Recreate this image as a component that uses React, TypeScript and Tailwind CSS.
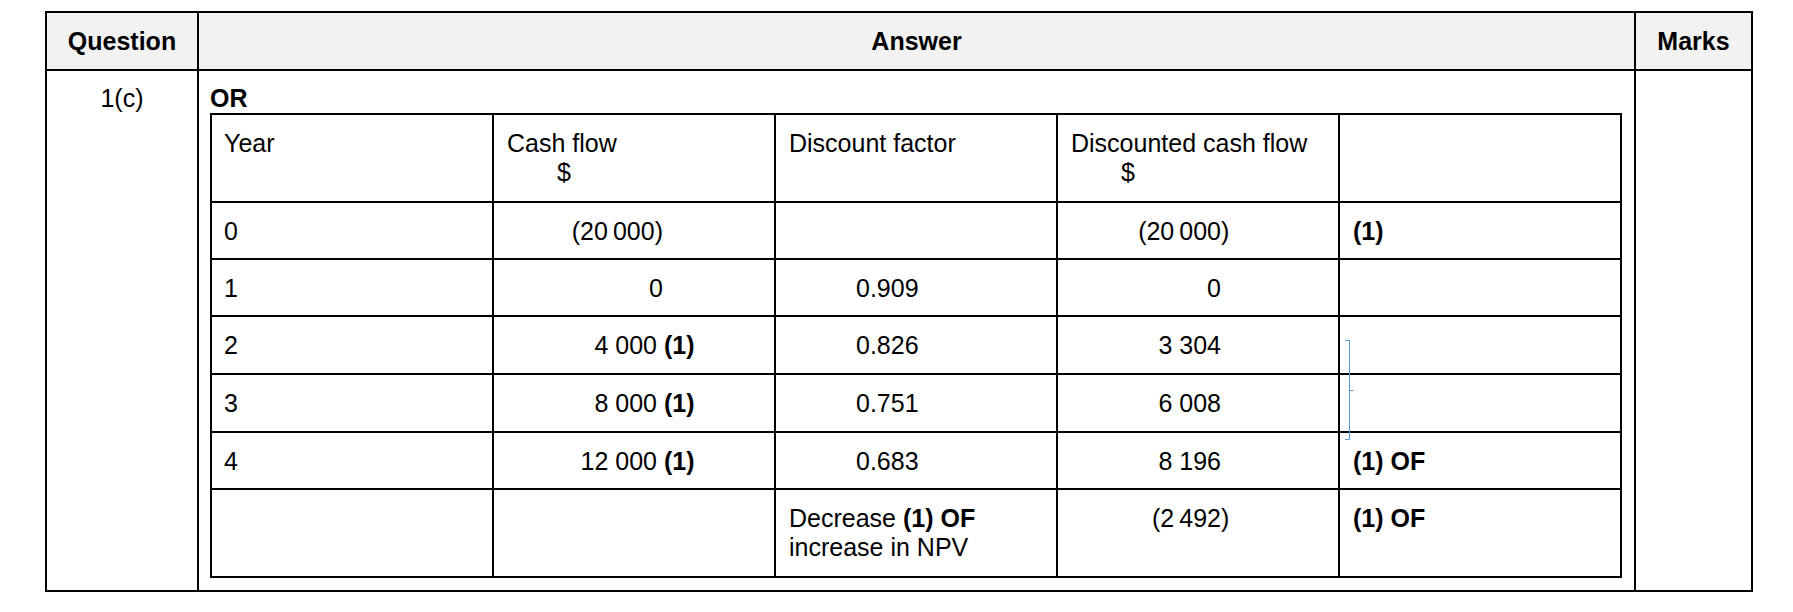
import React from "react";

function Paren({ children }: { children: React.ReactNode }) {
  // closing parenthesis hangs past the right-aligned digits
  return (
    <>
      ({children}
      <span className="inline-block w-0">)</span>
    </>
  );
}

export default function App() {
  return (
    <div className="min-h-[612px] w-[1793px] bg-white pt-[11px] pl-[45px] font-['Liberation_Sans',Arial,sans-serif] text-[25px] leading-[29px] text-black">
      <div className="w-[1708px] border-l-2 border-t-2 border-black">
        <div className="grid grid-cols-[152px_1437px_117px]">
          {/* header */}
          <div className="flex h-[58px] items-center justify-center border-r-2 border-b-2 border-black bg-[#f2f2f2] font-bold">
            Question
          </div>
          <div className="flex h-[58px] items-center justify-center border-r-2 border-b-2 border-black bg-[#f2f2f2] font-bold">
            Answer
          </div>
          <div className="flex h-[58px] items-center justify-center border-r-2 border-b-2 border-black bg-[#f2f2f2] font-bold">
            Marks
          </div>

          {/* body */}
          <div className="border-r-2 border-b-2 border-black pt-[13px] text-center">1(c)</div>
          <div className="border-r-2 border-b-2 border-black pt-[13px] pb-[12px] pl-[11px]">
            <div className="font-bold">OR</div>
            <div className="relative grid w-[1412px] grid-cols-[repeat(5,282px)] border-l-2 border-t-2 border-black">
              {/* inner header */}
              <div className="h-[88px] border-r-2 border-b-2 border-black pt-[14px] pl-[12px]">Year</div>
              <div className="h-[88px] border-r-2 border-b-2 border-black pt-[14px] pl-[13px]">
                <div>Cash flow</div>
                <div className="pl-[50px]">$</div>
              </div>
              <div className="h-[88px] border-r-2 border-b-2 border-black pt-[14px] pl-[13px]">Discount factor</div>
              <div className="h-[88px] border-r-2 border-b-2 border-black pt-[14px] pl-[13px]">
                <div>Discounted cash flow</div>
                <div className="pl-[50px]">$</div>
              </div>
              <div className="h-[88px] border-r-2 border-b-2 border-black pt-[14px] pl-[13px]"></div>

              {/* year 0 */}
              <div className="h-[57px] border-r-2 border-b-2 border-black pt-[14px] pl-[12px]">0</div>
              <div className="h-[57px] border-r-2 border-b-2 border-black pt-[14px]">
                <span className="inline-block w-[169px] text-right">(20{"\u2009"}000)</span>
              </div>
              <div className="h-[57px] border-r-2 border-b-2 border-black pt-[14px] pl-[80px]"></div>
              <div className="h-[57px] border-r-2 border-b-2 border-black pt-[14px]">
                <span className="inline-block w-[163px] text-right">
                  <Paren>20{"\u2009"}000</Paren>
                </span>
              </div>
              <div className="h-[57px] border-r-2 border-b-2 border-black pt-[14px] pl-[13px] font-bold">(1)</div>

              {/* year 1 */}
              <div className="h-[57px] border-r-2 border-b-2 border-black pt-[14px] pl-[12px]">1</div>
              <div className="h-[57px] border-r-2 border-b-2 border-black pt-[14px]">
                <span className="inline-block w-[169px] text-right">0</span>
              </div>
              <div className="h-[57px] border-r-2 border-b-2 border-black pt-[14px] pl-[80px]">0.909</div>
              <div className="h-[57px] border-r-2 border-b-2 border-black pt-[14px]">
                <span className="inline-block w-[163px] text-right">0</span>
              </div>
              <div className="h-[57px] border-r-2 border-b-2 border-black pt-[14px] pl-[13px]"></div>

              {/* year 2 */}
              <div className="h-[58px] border-r-2 border-b-2 border-black pt-[14px] pl-[12px]">2</div>
              <div className="h-[58px] border-r-2 border-b-2 border-black pt-[14px] whitespace-nowrap">
                <span className="inline-block w-[163px] text-right">4 000</span> <span className="font-bold">(1)</span>
              </div>
              <div className="h-[58px] border-r-2 border-b-2 border-black pt-[14px] pl-[80px]">0.826</div>
              <div className="h-[58px] border-r-2 border-b-2 border-black pt-[14px]">
                <span className="inline-block w-[163px] text-right">3 304</span>
              </div>
              <div className="h-[58px] border-r-2 border-b-2 border-black pt-[14px] pl-[13px]"></div>

              {/* year 3 */}
              <div className="h-[58px] border-r-2 border-b-2 border-black pt-[14px] pl-[12px]">3</div>
              <div className="h-[58px] border-r-2 border-b-2 border-black pt-[14px] whitespace-nowrap">
                <span className="inline-block w-[163px] text-right">8 000</span> <span className="font-bold">(1)</span>
              </div>
              <div className="h-[58px] border-r-2 border-b-2 border-black pt-[14px] pl-[80px]">0.751</div>
              <div className="h-[58px] border-r-2 border-b-2 border-black pt-[14px]">
                <span className="inline-block w-[163px] text-right">6 008</span>
              </div>
              <div className="h-[58px] border-r-2 border-b-2 border-black pt-[14px] pl-[13px]"></div>

              {/* year 4 */}
              <div className="h-[57px] border-r-2 border-b-2 border-black pt-[14px] pl-[12px]">4</div>
              <div className="h-[57px] border-r-2 border-b-2 border-black pt-[14px] whitespace-nowrap">
                <span className="inline-block w-[163px] text-right">12 000</span> <span className="font-bold">(1)</span>
              </div>
              <div className="h-[57px] border-r-2 border-b-2 border-black pt-[14px] pl-[80px]">0.683</div>
              <div className="h-[57px] border-r-2 border-b-2 border-black pt-[14px]">
                <span className="inline-block w-[163px] text-right">8 196</span>
              </div>
              <div className="h-[57px] border-r-2 border-b-2 border-black pt-[14px] pl-[13px] font-bold">(1) OF</div>

              {/* total */}
              <div className="h-[88px] border-r-2 border-b-2 border-black pt-[14px] pl-[12px]"></div>
              <div className="h-[88px] border-r-2 border-b-2 border-black pt-[14px]"></div>
              <div className="h-[88px] border-r-2 border-b-2 border-black pt-[14px] pl-[13px]">
                <div>
                  Decrease <span className="font-bold">(1) OF</span>
                </div>
                <div>increase in NPV</div>
              </div>
              <div className="h-[88px] border-r-2 border-b-2 border-black pt-[14px]">
                <span className="inline-block w-[163px] text-right">
                  <Paren>2{"\u2009"}492</Paren>
                </span>
              </div>
              <div className="h-[88px] border-r-2 border-b-2 border-black pt-[14px] pl-[13px] font-bold">(1) OF</div>

              {/* blue bracket annotation overlay */}
              <svg
                className="absolute left-[1132px] top-[224px]"
                width="10"
                height="102"
                viewBox="0 0 10 102"
                fill="none"
              >
                <path d="M1 1.5H5.5V100.5H1M5.5 51.5H9.5" stroke="#5b9bd5" strokeWidth="1" />
              </svg>
            </div>
          </div>
          <div className="border-r-2 border-b-2 border-black"></div>
        </div>
      </div>
    </div>
  );
}
